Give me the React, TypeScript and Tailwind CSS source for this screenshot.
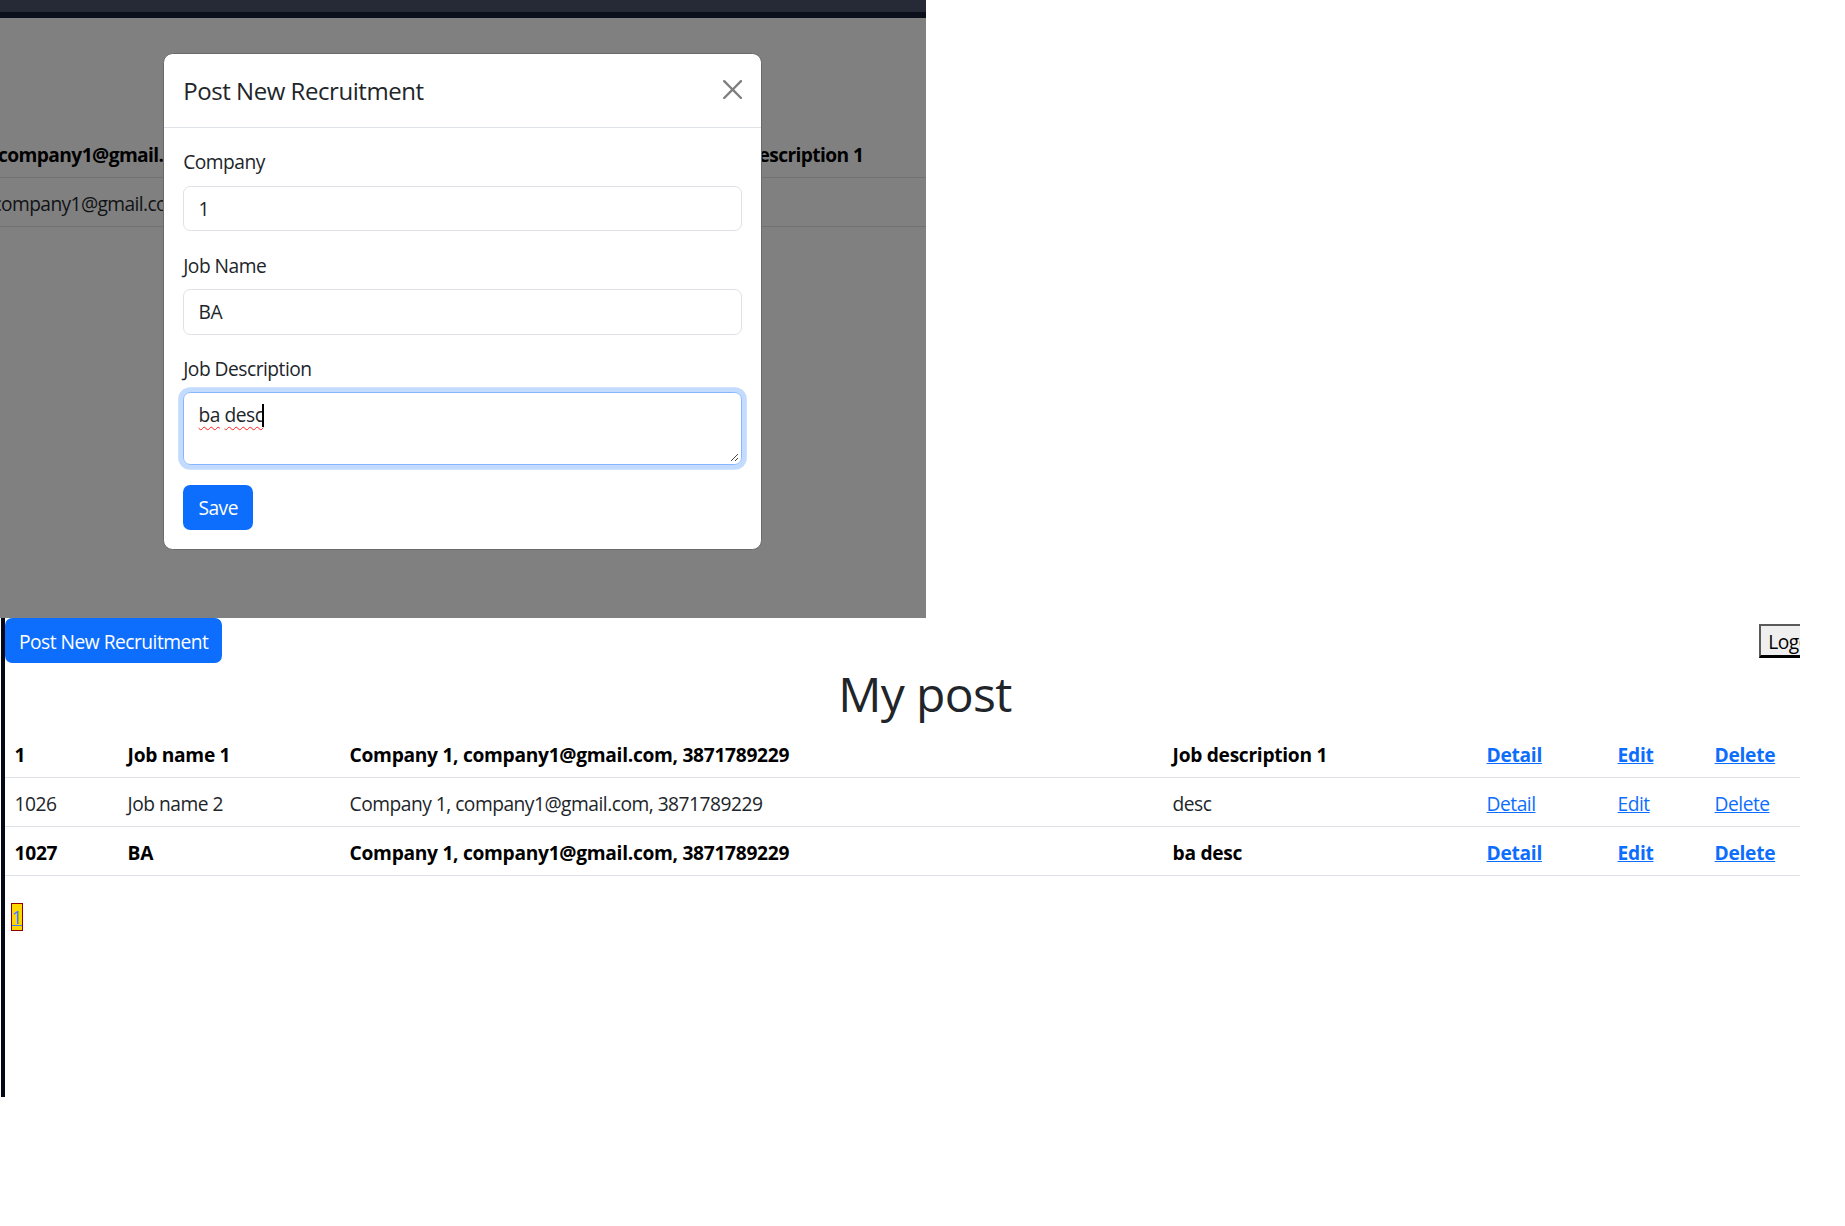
import React from "react";

type Row = { id: string; name: string; company: string; desc: string; bold: boolean };

const rows: Row[] = [
  { id: "1", name: "Job name 1", company: "Company 1, company1@gmail.com, 3871789229", desc: "Job description 1", bold: true },
  { id: "1026", name: "Job name 2", company: "Company 1, company1@gmail.com, 3871789229", desc: "desc", bold: false },
  { id: "1027", name: "BA", company: "Company 1, company1@gmail.com, 3871789229", desc: "ba desc", bold: true },
];

function Field({ label, value }: { label: string; value: string }) {
  return (
    <div className="mb-[19.2px]">
      <div className="h-[28.8px] text-[19.2px] leading-[28.8px] mb-[9.6px] pt-[1px] tracking-[-0.5px]">{label}</div>
      <div className="h-[45.6px] border border-[#dee2e6] rounded-[7.2px] px-[14.4px] pt-[2px] flex items-center text-[19.2px] leading-[28.8px] tracking-[-0.5px]">
        {value}
      </div>
    </div>
  );
}

function Modal() {
  return (
    <div className="absolute left-[163px] top-[53px] w-[599px] bg-white border border-[#6a6a6a] rounded-[9.6px]">
      <div className="flex items-center justify-between px-[19.2px] py-[18.6px] border-b border-[#dee2e6]">
        <h5 className="h-[36px] text-[24px] leading-[36px] font-medium tracking-[-0.45px] text-[#212529]">Post New Recruitment</h5>
        <svg viewBox="0 0 16 16" className="w-[19.2px] h-[19.2px] mb-[3px]">
          <path
            fill="#000"
            fillOpacity="0.5"
            d="M.293.293a1 1 0 0 1 1.414 0L8 6.586 14.293.293a1 1 0 1 1 1.414 1.414L9.414 8l6.293 6.293a1 1 0 0 1-1.414 1.414L8 9.414l-6.293 6.293a1 1 0 0 1-1.414-1.414L6.586 8 .293 1.707a1 1 0 0 1 0-1.414z"
          />
        </svg>
      </div>
      <div className="p-[19.2px] pb-[19px]">
        <Field label="Company" value="1" />
        <Field label="Job Name" value="BA" />
        <div className="mb-[19.7px]">
          <div className="h-[28.8px] text-[19.2px] leading-[28.8px] mb-[9.6px] pt-[1px] tracking-[-0.5px]">Job Description</div>
          <div className="relative h-[73px] border border-[#86b7fe] rounded-[7.2px] px-[14.4px] pt-[7.5px] shadow-[0_0_0_4.8px_rgba(13,110,253,0.25)] text-[19.2px] leading-[28.8px] tracking-[-0.5px]">
            <span className="underline decoration-wavy decoration-[#ff2020] decoration-1 underline-offset-[4px]">ba</span>{" "}
            <span className="underline decoration-wavy decoration-[#ff2020] decoration-1 underline-offset-[4px]">desc</span>
            <span className="inline-block w-[1.5px] h-[23px] bg-black align-[-5px] ml-[-1px]" />
            <svg viewBox="0 0 10 10" className="absolute right-[2px] bottom-[2px] w-[10px] h-[10px]">
              <line x1="9" y1="2" x2="2" y2="9" stroke="#4a4a4a" strokeWidth="1" />
              <line x1="9" y1="6" x2="6" y2="9" stroke="#4a4a4a" strokeWidth="1" />
            </svg>
          </div>
        </div>
        <button className="h-[45px] w-[70px] rounded-[7.2px] bg-[#0d6efd] text-white text-[19.2px] leading-[28.8px] pt-[2px] tracking-[-0.5px] flex items-center justify-center">
          Save
        </button>
      </div>
    </div>
  );
}

function BgRow({ bold, desc }: { bold: boolean; desc: string }) {
  return (
    <div
      className={
        "flex h-[49px] items-center pt-[4px] border-b border-[#6f7173] text-[19.2px] leading-[28.8px] tracking-[-0.6px] " +
        (bold ? "font-bold text-black" : "font-normal text-[#111315]")
      }
    >
      <div className="w-[163px] shrink-0 overflow-hidden flex">
        <span className="ml-[-112px] shrink-0 whitespace-nowrap">Company 1, company1@gmail.com, 3871789229</span>
      </div>
      <div className="w-[599px] shrink-0" />
      <div className="flex-1 overflow-hidden flex">
        <span className="ml-[-48px] shrink-0 whitespace-nowrap">{desc}</span>
      </div>
    </div>
  );
}

export default function App() {
  return (
    <div className="font-['Open_Sans',sans-serif] bg-white min-h-[1226px] w-[1845px] text-[#212529]">
      <div className="relative w-[926px] h-[618px] overflow-hidden">
        <div className="h-[12px] bg-[#262a36]" />
        <div className="h-[6px] bg-[#0b0e1b]" />
        <div className="h-[600px] bg-[#808080] pt-[111px] overflow-hidden">
          <BgRow bold={true} desc="Job description 1" />
          <BgRow bold={false} desc="" />
        </div>
        <Modal />
      </div>

      <div className="ml-[1px] w-[1799px] h-[479px] border-l-[4px] border-[#050816] overflow-hidden">
        <div className="flex items-center justify-between h-[45px]">
          <button className="h-[45px] w-[217.4px] shrink-0 rounded-[7.2px] bg-[#0d6efd] text-white text-[19.2px] leading-[28.8px] pt-[3px] tracking-[-0.5px] flex items-center justify-center whitespace-nowrap">
            Post New Recruitment
          </button>
          <div className="w-[41px] flex overflow-hidden shrink-0">
            <button className="h-[34px] shrink-0 bg-[#efefef] border-t-2 border-l-2 border-r-2 border-[#5a5a5a] border-b-[3px] border-b-black px-[7.2px] pt-[2px] text-[19.2px] leading-[25px] text-black tracking-[-0.5px] whitespace-nowrap">
              Logout
            </button>
          </div>
        </div>
        <h1 className="text-[48px] leading-[57.6px] pt-[2px] h-[57.6px] font-medium text-center pl-[45px] mb-[8.4px] tracking-[-0.6px] text-[#212529]">
          My post
        </h1>
        <div>
          {rows.map((r) => (
            <div
              key={r.id}
              className={
                "grid grid-cols-[113px_222px_823px_314px_131px_97px_95px] border-b border-[#dee2e6] text-[19.2px] leading-[28.8px] " +
                (r.bold ? "font-bold text-black tracking-[-0.3px]" : "font-normal text-[#212529] tracking-[-0.5px]")
              }
            >
              <div className="px-[9.6px] pt-[11.6px] pb-[7.6px] whitespace-nowrap">{r.id}</div>
              <div className="px-[9.6px] pt-[11.6px] pb-[7.6px] whitespace-nowrap">{r.name}</div>
              <div className="px-[9.6px] pt-[11.6px] pb-[7.6px] whitespace-nowrap">{r.company}</div>
              <div className="px-[9.6px] pt-[11.6px] pb-[7.6px] whitespace-nowrap">{r.desc}</div>
              <div className="px-[9.6px] pt-[11.6px] pb-[7.6px]">
                <a className="text-[#0d6efd] underline">Detail</a>
              </div>
              <div className="px-[9.6px] pt-[11.6px] pb-[7.6px]">
                <a className="text-[#0d6efd] underline">Edit</a>
              </div>
              <div className="px-[9.6px] pt-[11.6px] pb-[7.6px]">
                <a className="text-[#0d6efd] underline">Delete</a>
              </div>
            </div>
          ))}
        </div>
        <div className="mt-[27px] ml-[6px] w-[12px] h-[28px] bg-[#ffd700] border border-[#8b0000] flex justify-center overflow-hidden">
          <a className="text-[#3d7bff] underline text-[19px] leading-[26px]">1</a>
        </div>
      </div>
    </div>
  );
}
